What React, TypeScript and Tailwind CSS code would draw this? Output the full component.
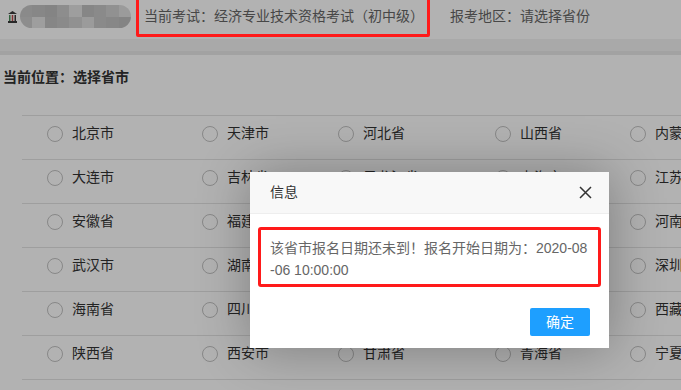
import React from "react";

const rows: string[][] = [
  ["北京市", "天津市", "河北省", "山西省", "内蒙古"],
  ["大连市", "吉林省", "黑龙江省", "上海市", "江苏省"],
  ["安徽省", "福建省", "江西省", "山东省", "河南省"],
  ["武汉市", "湖南省", "广东省", "广西", "深圳市"],
  ["海南省", "四川省", "贵州省", "云南省", "西藏"],
  ["陕西省", "西安市", "甘肃省", "青海省", "宁夏"],
  ["新疆", "兵团", "重庆市", "宁波市", "厦门市"],
];

// mosaic blocks standing in for the blurred logo text
const mosaic = ["#c6c6c6", "#c2c2c2", "#bdbdbd", "#cbcbcb", "#e2e2e2", "#c0c0c0", "#c6c6c6", "#d0d0d0", "#dedede"];

const Radio = ({ label }: { label: string }) => (
  <div className="flex items-center">
    <span className="w-[16px] h-[16px] rounded-full border border-[#c2c2c2] bg-white shrink-0" />
    <span className="ml-[9px] text-[14px] text-[#333] whitespace-nowrap">{label}</span>
  </div>
);

export default function App() {
  return (
    <div
      className="relative w-[681px] h-[390px] overflow-hidden bg-white"
      style={{ fontFamily: '"Liberation Sans", "Noto Sans CJK SC", sans-serif' }}
    >
      {/* header */}
      <div className="flex items-center h-[39px] pb-[6px]">
        <div className="flex items-center pl-[8px] w-[144px]">
          <svg width="9" height="12" viewBox="0 0 9 12">
            <path d="M0 3 L4.5 0 L9 3 Z" fill="#3a3a3a" />
            <rect x="1" y="4" width="1.5" height="6" fill="#4a8f5a" />
            <rect x="3.75" y="4" width="1.5" height="6" fill="#b84a4a" />
            <rect x="6.5" y="4" width="1.5" height="6" fill="#3a3a3a" />
            <rect x="0" y="10" width="9" height="2" fill="#3a3a3a" />
          </svg>
          <div className="ml-[3px] flex h-[23px] w-[111px] rounded-full overflow-hidden">
            {mosaic.map((c, i) => (
              <div key={i} className="flex-1 flex flex-col">
                <div className="flex-1" style={{ background: c }} />
                <div className="flex-1" style={{ background: mosaic[(i + 3) % mosaic.length] }} />
              </div>
            ))}
          </div>
        </div>
        <span className="relative text-[14px] text-[#666] whitespace-nowrap">
          当前考试：经济专业技术资格考试（初中级）
          <span className="absolute left-[-8px] right-[-6px] top-[-10px] bottom-[-10px] border-[3px] border-[#ff1a1a] rounded-[2px] z-50" />
        </span>
        <span className="ml-[26px] text-[14px] text-[#666] whitespace-nowrap">报考地区：请选择省份</span>
      </div>
      <div className="h-[12px] bg-[#f3f3f3]" />
      <div className="h-[4px] bg-[#e9e9e9]" />

      {/* location */}
      <div className="h-[44px] flex items-center pl-[3px] text-[14px] font-bold text-[#333]">当前位置：选择省市</div>

      {/* province list */}
      <div className="mt-[16px] ml-[22px] border-t border-[#e2e2e2]">
        {rows.map((r, i) => (
          <div
            key={i}
            className="h-[44px] border-b border-[#e2e2e2] grid grid-cols-[155px_136px_157px_135px_1fr] items-center pl-[25px] pb-[8px]"
          >
            {r.map((p) => (
              <Radio key={p} label={p} />
            ))}
          </div>
        ))}
      </div>

      {/* shade */}
      <div className="absolute inset-0 bg-black/30 z-40" />

      {/* dialog */}
      <div className="absolute left-[250px] top-[172px] w-[359px] bg-white z-50 shadow-[1px_1px_50px_rgba(0,0,0,0.3)]">
        <div className="h-[42px] bg-[#f8f8f8] border-b border-[#eee] flex items-center justify-between pl-[20px] pr-[17px]">
          <span className="text-[14px] text-[#333]">信息</span>
          <svg width="13" height="13" viewBox="0 0 13 13">
            <path d="M1 1 L12 12 M12 1 L1 12" stroke="#333" strokeWidth="1.5" fill="none" />
          </svg>
        </div>
        <div className="pt-[13px] px-[8px]">
          <div className="border-[3px] border-[#ff1a1a] rounded-[3px] pt-[7px] pb-[3px] pl-[9px] text-[14px] leading-[22px] text-[#666]">
            该省市报名日期还未到！报名开始日期为：2020-08
            <br />
            -06 10:00:00
          </div>
        </div>
        <div className="flex justify-end pt-[21px] pr-[19px] pb-[12px]">
          <button className="w-[60px] h-[28px] bg-[#1e9fff] text-white text-[14px] rounded-[2px]">确定</button>
        </div>
      </div>
    </div>
  );
}
